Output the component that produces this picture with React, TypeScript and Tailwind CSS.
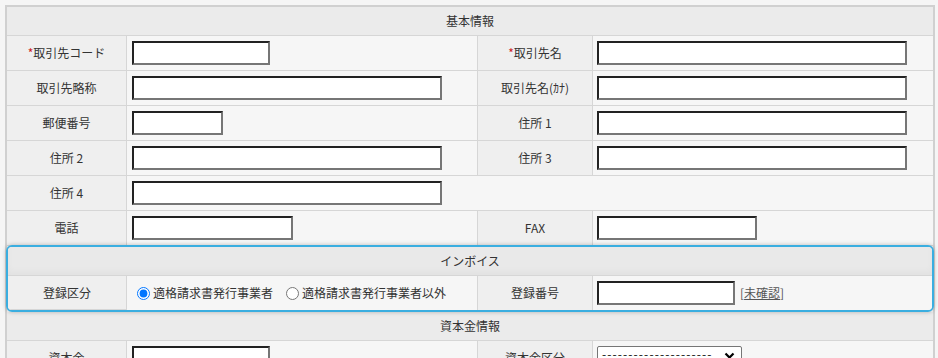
import React from "react";

const font = { fontFamily: '"Noto Sans CJK JP", "Noto Sans", sans-serif' };

function Label({ children, last = false, h = "h-[35px]" }: { children?: React.ReactNode; last?: boolean; h?: string }) {
  return (
    <div className={`flex items-center justify-center ${h} bg-[#efefef] border-b border-[#d6d6d6] ${last ? "" : "border-r"}`}>
      {children}
    </div>
  );
}

function Value({ children, last = false, span = "", pl = "pl-[5px]", h = "h-[35px]" }: { children?: React.ReactNode; last?: boolean; span?: string; pl?: string; h?: string }) {
  return (
    <div className={`flex items-center ${h} ${pl} bg-[#f6f6f6] border-b border-[#d6d6d6] ${last ? "" : "border-r"} ${span}`}>
      {children}
    </div>
  );
}

function Input({ w }: { w: string }) {
  return (
    <input
      type="text"
      className={`${w} h-[24px] bg-white border-2 border-t-[#222] border-l-[#222] border-b-[#767676] border-r-[#767676] outline-none`}
    />
  );
}

function Header({ children, h = "h-[29px]" }: { children: React.ReactNode; h?: string }) {
  return (
    <div className={`col-span-4 flex items-center justify-center ${h} bg-[#ebebeb] border-b border-[#d6d6d6]`}>
      {children}
    </div>
  );
}

function Req({ children }: { children: React.ReactNode }) {
  return (
    <span>
      <span className="text-[#cc2222]">*</span>
      {children}
    </span>
  );
}

export default function App() {
  return (
    <div className="w-[938px] h-[358px] overflow-hidden bg-[#f5f5f5] text-[12px] text-[#333]" style={font}>
      <div className="ml-[5px] pt-[5px] w-[930px]">
        <div className="border-2 border-[#d0d0d0] bg-[#f6f6f6]">
          <div className="grid grid-cols-[120px_351px_115px_1fr]">
            <Header>基本情報</Header>

            <Label><Req>取引先コード</Req></Label>
            <Value><Input w="w-[138px]" /></Value>
            <Label><Req>取引先名</Req></Label>
            <Value last pl="pl-[4px]"><Input w="w-[310px]" /></Value>

            <Label>取引先略称</Label>
            <Value><Input w="w-[310px]" /></Value>
            <Label>取引先名(ｶﾅ)</Label>
            <Value last pl="pl-[4px]"><Input w="w-[310px]" /></Value>

            <Label>郵便番号</Label>
            <Value><Input w="w-[91px]" /></Value>
            <Label>住所 1</Label>
            <Value last pl="pl-[4px]"><Input w="w-[310px]" /></Value>

            <Label>住所 2</Label>
            <Value><Input w="w-[310px]" /></Value>
            <Label>住所 3</Label>
            <Value last pl="pl-[4px]"><Input w="w-[310px]" /></Value>

            <Label>住所 4</Label>
            <Value last span="col-span-3"><Input w="w-[310px]" /></Value>

            <Label>電話</Label>
            <Value><Input w="w-[161px]" /></Value>
            <Label>FAX</Label>
            <Value last pl="pl-[4px]"><Input w="w-[160px]" /></Value>
          </div>

          <div className="-mt-px -mx-[1px] relative border-2 border-[#3aaee0] rounded-[6px] overflow-hidden shadow-[0_0_4px_rgba(0,0,0,0.25)]">
            <div className="grid grid-cols-[119px_351px_115px_1fr]">
              <div className="col-span-4 flex items-center justify-center h-[29px] bg-[#e9e9e9] border-b border-[#d6d6d6] shadow-[inset_0_-4px_6px_rgba(0,0,0,0.03)]">
                インボイス
              </div>
              <Label h="h-[34px]">登録区分</Label>
              <div className="flex items-center h-[34px] pl-[5px] bg-[#f6f6f6] border-r border-[#d6d6d6]">
                <label className="flex items-center">
                  <input type="radio" name="reg" defaultChecked className="ml-[5px] mr-[3px] w-[13px] h-[13px]" />
                  <span>適格請求書発行事業者</span>
                </label>
                <label className="flex items-center ml-[8px]">
                  <input type="radio" name="reg" className="ml-[5px] mr-[3px] w-[13px] h-[13px]" />
                  <span>適格請求書発行事業者以外</span>
                </label>
              </div>
              <div className="flex items-center justify-center h-[34px] bg-[#efefef] border-r border-[#d6d6d6]">登録番号</div>
              <div className="flex items-center h-[34px] pl-[4px] bg-[#f6f6f6]">
                <Input w="w-[138px]" />
                <span className="ml-[5px] text-[#555]">
                  [<span className="underline">未確認</span>]
                </span>
              </div>
            </div>
          </div>

          <div className="grid grid-cols-[120px_351px_115px_1fr]">
            <Header>資本金情報</Header>
            <Label>資本金</Label>
            <Value><Input w="w-[138px]" /></Value>
            <Label>資本金区分</Label>
            <Value last pl="pl-[4px]">
              <div className="relative w-[145px] h-[24px] bg-white border border-[#767676] rounded-[2px] flex items-start pl-[4px] -mt-[1px]">
                <span className="text-[12px] leading-[14px] tracking-[1.1px] text-[#111]">---------------------</span>
                <svg className="absolute right-[6px] top-[5px]" width="11" height="8" viewBox="0 0 11 8">
                  <path d="M1.5 1.5 L5.5 5.5 L9.5 1.5" fill="none" stroke="#000" strokeWidth="2.2" />
                </svg>
              </div>
            </Value>
          </div>
        </div>
      </div>
    </div>
  );
}
